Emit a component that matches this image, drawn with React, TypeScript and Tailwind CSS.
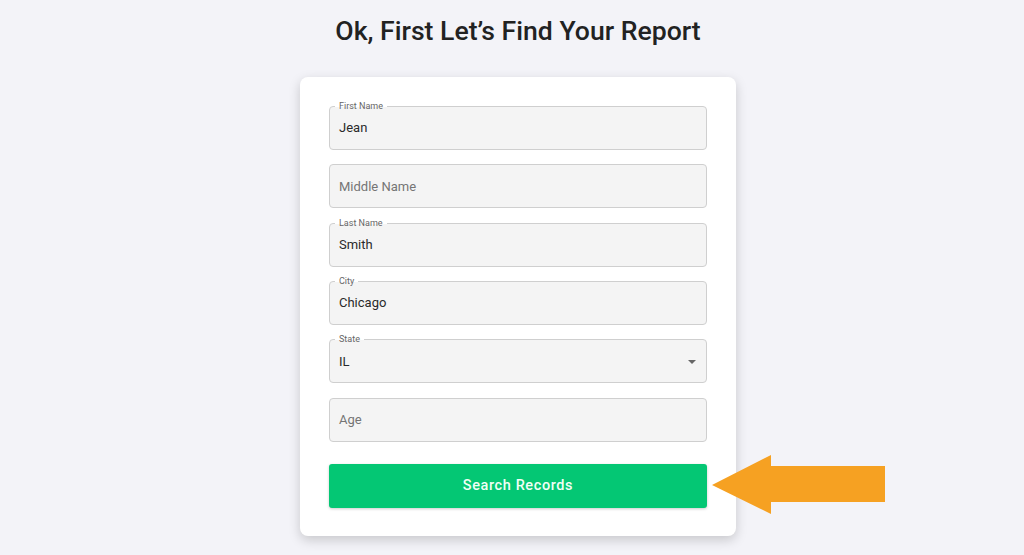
import React from "react";

const font = { fontFamily: "Roboto, 'Noto Sans', sans-serif" };

function Field({ label, value, placeholder, select }: { label?: string; value?: string; placeholder?: string; select?: boolean }) {
  return (
    <div className="relative h-[44px] rounded-[4px] border border-[#cfcfcf] bg-[#f4f4f4] flex items-center pl-[9px] pr-[10px]">
      {label && (
        <span className="absolute left-[5px] top-[-7px] px-[4px] text-[9px] leading-[12px] text-[#666] bg-[linear-gradient(to_bottom,white_55%,#f4f4f4_55%)]">
          {label}
        </span>
      )}
      {value ? (
        <span className="text-[13px] text-[#2a2a2a]">{value}</span>
      ) : (
        <span className="text-[13px] text-[#757575]">{placeholder}</span>
      )}
      {select && (
        <svg className="ml-auto mr-[0px] mt-[1px]" width="8" height="4" viewBox="0 0 8 4">
          <path d="M0 0 L8 0 L4 4 Z" fill="#666" />
        </svg>
      )}
    </div>
  );
}

export default function App() {
  return (
    <div className="min-h-[555px] w-full bg-[#f3f3f8] pl-3 flex flex-col items-center" style={font}>
      <h1 className="mt-[15px] text-[26.6px] leading-[32px] font-medium text-[#222]">Ok, First Let’s Find Your Report</h1>
      <div className="mt-[30px] w-[436px] rounded-[8px] bg-white shadow-[0_4px_12px_rgba(0,0,0,0.18)] px-[29px] pt-[29px] pb-[28px]">
        <div className="flex flex-col gap-[14.33px]">
          <Field label="First Name" value="Jean" />
          <Field placeholder="Middle Name" />
          <Field label="Last Name" value="Smith" />
          <Field label="City" value="Chicago" />
          <Field label="State" value="IL" select />
          <Field placeholder="Age" />
        </div>
        <button className="mt-[22px] w-full h-[44px] rounded-[3px] bg-[#04c774] text-[#f0fff6] text-[14.5px] font-medium tracking-[0.6px] shadow-[0_1px_3px_rgba(0,0,0,0.2)]">
          Search Records
        </button>
      </div>
      <svg className="absolute left-[711px] top-[454px]" width="176" height="62" viewBox="0 0 176 62">
        <path d="M1 31 L60 1 L60 12 L174 12 L174 48 L60 48 L60 60 Z" fill="#f6a122" />
      </svg>
    </div>
  );
}
